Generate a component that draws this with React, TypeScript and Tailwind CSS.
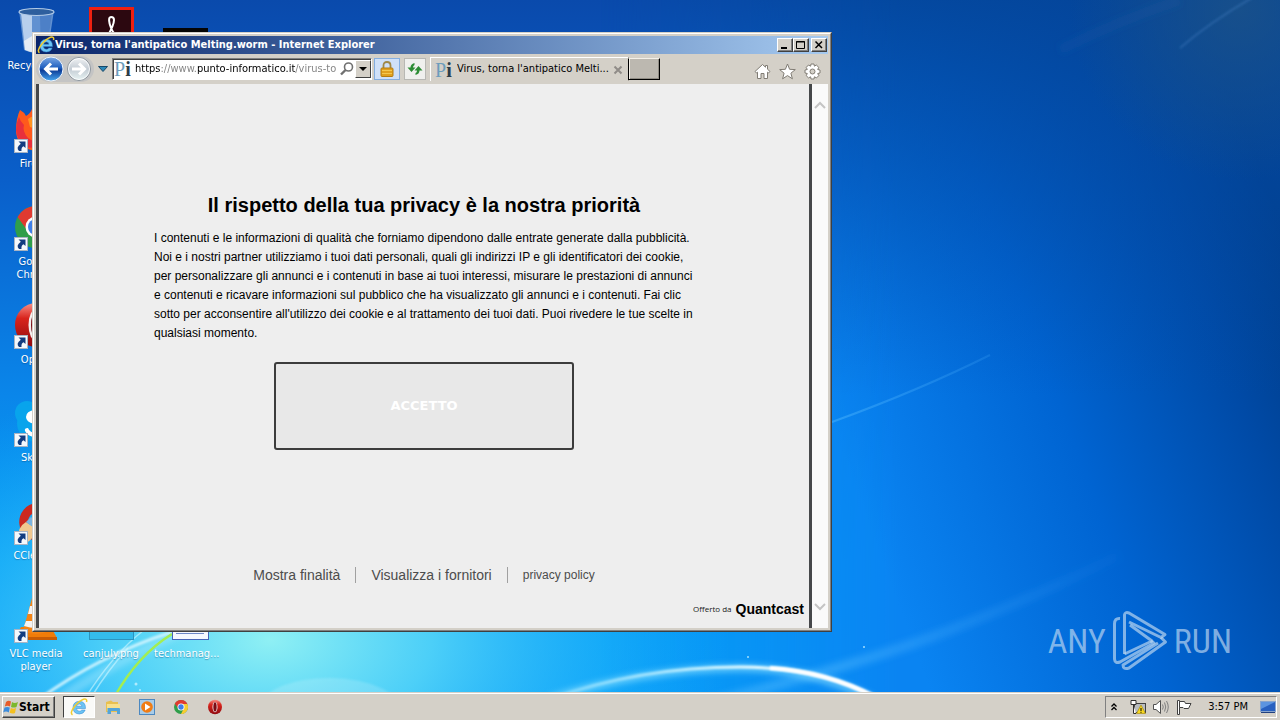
import { useState } from "react"
import type { ReactNode } from "react"

const tahoma = "font-['DejaVu_Sans_Condensed','DejaVu_Sans',sans-serif]"
const arial = "font-['Liberation_Sans',Arial,sans-serif]"

function Wallpaper() {
  return (
    <svg className="absolute inset-0 h-full w-full" viewBox="0 0 1280 720" preserveAspectRatio="none" aria-hidden="true">
      <defs>
        <linearGradient id="sky" x1="0" y1="0" x2="0" y2="1">
          <stop offset="0" stopColor="#0a4aac" />
          <stop offset="0.25" stopColor="#0a5fca" />
          <stop offset="0.55" stopColor="#0a86ea" />
          <stop offset="0.78" stopColor="#02a2f6" />
          <stop offset="1" stopColor="#0aa4fa" />
        </linearGradient>
        <linearGradient id="right" x1="830" y1="420" x2="1290" y2="250" gradientUnits="userSpaceOnUse">
          <stop offset="0" stopColor="#0a84f2" />
          <stop offset="0.45" stopColor="#0064d2" />
          <stop offset="0.8" stopColor="#004aa6" />
          <stop offset="1" stopColor="#003c88" />
        </linearGradient>
        <linearGradient id="topShade" x1="0" y1="0" x2="0" y2="1">
          <stop offset="0" stopColor="#04459a" stopOpacity="0.9" />
          <stop offset="0.2" stopColor="#044aa4" stopOpacity="0.6" />
          <stop offset="0.55" stopColor="#0450b0" stopOpacity="0" />
        </linearGradient>
        <linearGradient id="fade" x1="600" y1="0" x2="900" y2="0" gradientUnits="userSpaceOnUse">
          <stop offset="0" stopColor="#fff" stopOpacity="0" />
          <stop offset="1" stopColor="#fff" />
        </linearGradient>
        <mask id="rightMask">
          <rect width="1280" height="720" fill="url(#fade)" />
        </mask>
        <radialGradient id="glow" cx="270" cy="640" r="460" gradientUnits="userSpaceOnUse" gradientTransform="translate(0 256) scale(1 0.6)">
          <stop offset="0" stopColor="#8ff0f4" />
          <stop offset="0.35" stopColor="#54d4f8" stopOpacity="0.9" />
          <stop offset="1" stopColor="#14a2fa" stopOpacity="0" />
        </radialGradient>
        <radialGradient id="corner" cx="1240" cy="10" r="170" gradientUnits="userSpaceOnUse">
          <stop offset="0" stopColor="#1c5288" stopOpacity="0.8" />
          <stop offset="1" stopColor="#1c5288" stopOpacity="0" />
        </radialGradient>
        <linearGradient id="arc" x1="550" y1="0" x2="880" y2="0" gradientUnits="userSpaceOnUse">
          <stop offset="0" stopColor="#9fe6ff" stopOpacity="0.5" />
          <stop offset="0.6" stopColor="#e6fbff" />
          <stop offset="1" stopColor="#fff" />
        </linearGradient>
        <linearGradient id="ray" x1="830" y1="0" x2="1150" y2="0" gradientUnits="userSpaceOnUse">
          <stop offset="0" stopColor="#5cc0ff" stopOpacity="0.4" />
          <stop offset="1" stopColor="#3aa0ff" stopOpacity="0" />
        </linearGradient>
        <filter id="soft" x="-20%" y="-50%" width="140%" height="200%">
          <feGaussianBlur stdDeviation="3" />
        </filter>
        <filter id="softer" x="-20%" y="-50%" width="140%" height="200%">
          <feGaussianBlur stdDeviation="1" />
        </filter>
      </defs>
      <rect width="1280" height="720" fill="url(#sky)" />
      <g mask="url(#rightMask)">
        <rect x="600" width="680" height="720" fill="url(#right)" />
        <rect x="600" width="680" height="720" fill="url(#topShade)" />
      </g>
      <rect x="1000" width="280" height="200" fill="url(#corner)" />
      <rect y="300" width="860" height="420" fill="url(#glow)" />
      <path d="M245 720 Q265 678 330 678 Q390 678 418 720Z" fill="#fff" opacity="0.16" filter="url(#softer)" />
      <g fill="none">
        <path d="M832 422 Q920 390 990 355" stroke="url(#ray)" strokeWidth="2" />
        <path d="M700 705 Q860 665 950 630 T1120 555" stroke="url(#ray)" strokeWidth="10" filter="url(#soft)" />
        <path d="M1180 48 Q1210 22 1255 -4" stroke="#4a86c8" strokeOpacity="0.35" strokeWidth="2" filter="url(#softer)" />
        <path d="M1060 50 Q1120 20 1180 0" stroke="#2a68b0" strokeOpacity="0.15" strokeWidth="10" filter="url(#soft)" />
        <path d="M0 740 Q90 672 190 628" stroke="#c8f4ff" strokeOpacity="0.35" strokeWidth="9" filter="url(#soft)" />
        <path d="M38 700 Q100 655 172 632" stroke="#dcf8ff" strokeOpacity="0.85" strokeWidth="3" filter="url(#softer)" />
        <path d="M84 700 Q112 655 144 630 M92 696 Q108 670 128 648" stroke="#d0f6ff" strokeOpacity="0.6" strokeWidth="1.5" />
        <path d="M115 696 Q138 655 172 634" stroke="#a4ee50" strokeWidth="2.5" />
        <path d="M550 699 Q640 669 740 668 Q820 668 884 706" stroke="#8adfff" strokeOpacity="0.7" strokeWidth="7" filter="url(#soft)" />
        <path d="M550 699 Q640 667 740 667 Q820 667 876 698" stroke="url(#arc)" strokeWidth="3" filter="url(#softer)" />
        <path d="M770 668 Q825 671 876 697" stroke="#fff" strokeWidth="4" filter="url(#softer)" />
      </g>
      <g fill="#c8f2ff" opacity="0.8">
        <circle cx="748" cy="657" r="1" />
        <circle cx="864" cy="647" r="1" />
        <circle cx="136" cy="684" r="1.5" />
        <circle cx="140" cy="690" r="1" />
      </g>
    </svg>
  )
}

/* ---------- desktop icons ---------- */

function BinIcon() {
  return (
    <svg viewBox="0 0 48 48" className="h-12 w-12">
      <path d="M7 3 L42 3 L36 43 Q24 49 12 43Z" fill="#7fa8dc" fillOpacity="0.75" />
      <path d="M9 6 L20 8 L20 44 L13 43Z" fill="#dbe9fa" fillOpacity="0.7" />
      <path d="M28 9 L40 6 L35 42 L29 44Z" fill="#3f74c0" fillOpacity="0.6" />
      <path d="M12 34 L20 29 L30 34 L36 32 L34 43 Q24 48 13 43Z" fill="#eef2f6" fillOpacity="0.85" />
      <ellipse cx="24.500" cy="5" rx="17.500" ry="3.500" fill="#2e5f9e" stroke="#b4cce8" strokeWidth="1.200" />
    </svg>
  )
}

function AcrobatIcon() {
  return (
    <svg viewBox="0 0 48 48" className="h-12 w-12">
      <rect x="3.500" y="1.500" width="42" height="42" fill="#2c0810" stroke="#ee2010" strokeWidth="3" />
      <path d="M24 10c-3 0-2 6 0 11 2 5 6 9 11 9 3-1 1-4-6-4-6 0-13 4-15 8-1 3 3 2 6-4 3-5 7-13 7-17 0-2-1-3-3-3z" fill="none" stroke="#fff" strokeWidth="2" />
    </svg>
  )
}

function TerminalIcon() {
  return (
    <svg viewBox="0 0 48 48" className="h-12 w-12">
      <rect x="1" y="21" width="45" height="26" fill="#050505" />
    </svg>
  )
}

function FirefoxIcon() {
  return (
    <svg viewBox="0 0 48 48" className="h-12 w-12">
      <path d="M8 5 Q12 7 14 11 Q18 9 20 4 Q25 8 28 8 Q46 10 46 27 Q45 45 26 46 Q6 45 4 27 Q4 13 8 5Z" fill="#ff5a1c" />
      <path d="M4 25 Q4 18 7 12 Q8 16 12 20 Q10 26 16 33 Q22 38 30 37 Q20 46 12 41 Q5 35 4 25Z" fill="#e8303c" />
      <path d="M16 14 Q20 10 28 12 L22 18 L24 24 L18 22Z" fill="#ff9420" />
      <circle cx="29" cy="25" r="9" fill="#3a2a9c" />
    </svg>
  )
}

function ChromeIcon({ className = "h-12 w-12" }: { className?: string }) {
  return (
    <svg viewBox="0 0 48 48" className={className}>
      <circle cx="24" cy="24" r="21" fill="#2f9e4a" />
      <path d="M5.500 14 A21 21 0 0 1 43 15 L24 15 Q16 16 15 27Z" fill="#e03a30" />
      <path d="M43 15 A21 21 0 0 1 24 45 L32 29 Q35 21 29 15Z" fill="#f8cc30" />
      <circle cx="24" cy="24" r="10.500" fill="#fff" />
      <circle cx="24" cy="24" r="8" fill="#3f7fe8" />
    </svg>
  )
}

function OperaIcon({ className = "h-12 w-12" }: { className?: string }) {
  return (
    <svg viewBox="0 0 48 48" className={className}>
      <defs>
        <linearGradient id="operaRed" x1="0" y1="0" x2="0" y2="1">
          <stop offset="0" stopColor="#f89088" />
          <stop offset="0.35" stopColor="#d8241c" />
          <stop offset="1" stopColor="#8e0a10" />
        </linearGradient>
      </defs>
      <ellipse cx="24" cy="24" rx="21" ry="22" fill="url(#operaRed)" />
      <ellipse cx="24" cy="24" rx="7.500" ry="16" fill="#f4f0f0" />
      <ellipse cx="24" cy="24" rx="5" ry="14" fill="#7c0c14" />
    </svg>
  )
}

function SkypeIcon() {
  return (
    <svg viewBox="0 0 48 48" className="h-12 w-12">
      <circle cx="15" cy="14" r="12" fill="#08a4ec" />
      <circle cx="24" cy="24" r="19" fill="#08a4ec" />
      <circle cx="33" cy="34" r="12" fill="#0894dc" />
      <path d="M33 17 Q30 11 23 11 Q14 12 14 18 Q14 23 22 25 Q31 27 31 30 Q30 34 24 34 Q18 34 16 29 Q12 29 13 32 Q16 38 24 38 Q36 37 36 29 Q35 23 27 21 Q19 19 20 17 Q25 13 29 19 Q33 20 33 17Z" fill="#fff" />
    </svg>
  )
}

function CCleanerIcon() {
  return (
    <svg viewBox="0 0 48 48" className="h-12 w-12">
      <path d="M38 10 A19 19 0 1 0 40 38 L33 32 A10 10 0 1 1 32 17Z" fill="#cc2820" />
      <path d="M6 43 Q5 30 14 25 L24 32 Q22 42 14 46Z" fill="#f0c890" />
      <path d="M14 25 L19 20 L27 28 L24 32Z" fill="#7cb4e0" />
    </svg>
  )
}

function VlcIcon() {
  return (
    <svg viewBox="0 0 48 48" className="h-12 w-12">
      <path d="M9 32 H39 L45 43 H3Z" fill="#f07c08" />
      <path d="M3 42 H45 V45 H3Z" fill="#c85c04" />
      <path d="M20 3 H28 L37 36 Q24 42 11 36Z" fill="#f48414" />
      <path d="M18 11 H30 L32 19 H16Z M14 26 H34 L36 31 Q24 35 12 31Z" fill="#f4f4f4" />
    </svg>
  )
}

function ImageFileIcon() {
  return (
    <svg viewBox="0 0 48 48" className="h-12 w-12">
      <rect x="2.500" y="4.500" width="44" height="40" fill="#34bcec" stroke="#2c94c0" />
    </svg>
  )
}

function DocumentIcon() {
  return (
    <svg viewBox="0 0 48 48" className="h-12 w-12">
      <rect x="10.500" y="2.500" width="36" height="42" fill="#f4f8ff" stroke="#4464b8" />
      <path d="M14 32.500H42M14 38.500H42" stroke="#6c88c8" />
    </svg>
  )
}

function ShortcutArrow() {
  return (
    <svg viewBox="0 0 14 14" className="absolute bottom-0 left-0.5 h-3.5 w-3.5">
      <rect x="0.500" y="0.500" width="13" height="13" fill="#f4f8fc" stroke="#a8b4c4" />
      <path d="M4.500 2.500H11.500V9L9.500 7.200Q7 8.500 7.500 12H5Q1.500 8.500 6.800 4.700Z" fill="#123c80" />
    </svg>
  )
}

interface DesktopItem {
  label: string
  icon: ReactNode
  shortcut?: boolean
  place?: string
}

const desktopItems: DesktopItem[] = [
  { label: "Recycle Bin", icon: <BinIcon /> },
  { label: "Firefox", icon: <FirefoxIcon />, shortcut: true },
  { label: "Google Chrome", icon: <ChromeIcon />, shortcut: true },
  { label: "Opera", icon: <OperaIcon />, shortcut: true },
  { label: "Skype", icon: <SkypeIcon />, shortcut: true },
  { label: "CCleaner", icon: <CCleanerIcon />, shortcut: true },
  { label: "VLC media player", icon: <VlcIcon />, shortcut: true },
  { label: "", icon: <AcrobatIcon />, place: "col-start-2 row-start-1" },
  { label: "canjuly.png", icon: <ImageFileIcon />, place: "col-start-2 row-start-7" },
  { label: "", icon: <TerminalIcon />, place: "col-start-3 row-start-1" },
  { label: "techmanag...", icon: <DocumentIcon />, place: "col-start-3 row-start-7" },
]

function DesktopIcons() {
  return (
    <ul className="relative grid w-fit grid-flow-col grid-cols-[72px_78px_72px] grid-rows-[repeat(6,98px)_auto] pt-[7px]">
      {desktopItems.map((item, i) => (
        <li key={i} className={`flex flex-col items-center ${item.place ?? ""}`}>
          <div className="relative h-12 w-12">
            {item.icon}
            {item.shortcut && <ShortcutArrow />}
          </div>
          <span className="mt-1 w-16 text-center text-[11px] leading-[13px] text-white [text-shadow:0_1px_1px_#00306060]">
            {item.label}
          </span>
        </li>
      ))}
    </ul>
  )
}

/* ---------- browser window ---------- */

function IeLogo({ className }: { className: string }) {
  return (
    <svg viewBox="0 0 18 18" className={className}>
      <path d="M15.500 10.500H6.500Q6.800 13.200 9.300 13.200Q11 13.200 11.800 12H15.200Q13.800 16 9.300 16Q3 15.600 3 9.500Q3.300 3.500 9.300 3.300Q15.800 3.600 15.500 10.500ZM6.600 8.200H12Q11.700 6 9.300 6Q7 6 6.600 8.200Z" fill="#6cc4f4" stroke="#2c84d0" strokeWidth="0.500" />
      <path d="M2.500 16.800Q-0.500 15 4.500 8.500Q9 3 13.500 1.300Q17.500 0.300 16.500 4" fill="none" stroke="#f0cc30" strokeWidth="1.500" />
    </svg>
  )
}

function PiLogo() {
  return (
    <span className="flex w-[18px] shrink-0 items-center font-['Liberation_Serif',serif] text-[20px] leading-5" aria-hidden="true">
      <span className="text-[#6c9cbc]">P</span>
      <span className="font-bold text-[#2c3c48]">i</span>
    </span>
  )
}

function CaptionButton({ label, children }: { label: string; children: ReactNode }) {
  return (
    <button
      aria-label={label}
      className="flex h-3.5 w-4 items-center justify-center border border-t-white border-r-[#404040] border-b-[#404040] border-l-white bg-[#d4d0c8] shadow-[inset_-1px_-1px_#808080]"
    >
      <svg viewBox="0 0 12 10" className="h-2.5 w-3" stroke="#000" fill="none">
        {children}
      </svg>
    </button>
  )
}

function TitleBar() {
  return (
    <header className="flex h-[18px] items-center bg-linear-to-r from-[#0a246a] to-[#a6caf0] px-px">
      <IeLogo className="h-[18px] w-[18px] shrink-0" />
      <h1 className="flex-1 truncate text-[11px] font-bold text-white">Virus, torna l'antipatico Melting.worm - Internet Explorer</h1>
      <CaptionButton label="Minimize">
        <path d="M2 8H8" strokeWidth="2" />
      </CaptionButton>
      <CaptionButton label="Maximize">
        <path d="M1.500 1.500H9.500V8.500H1.500ZM1 2H10" />
      </CaptionButton>
      <div className="w-0.5" />
      <CaptionButton label="Close">
        <path d="M2.500 1.500L9 8M9 1.500L2.500 8" strokeWidth="1.500" />
      </CaptionButton>
    </header>
  )
}

function Toolbar() {
  const [url, setUrl] = useState("https://www.punto-informatico.it/virus-to")

  return (
    <nav className="flex h-[30px] items-center bg-[#d4d0c8] pr-[7px]">
      <div className="flex rounded-full bg-[#c4c4c4] px-px">
        <button aria-label="Back" className="h-[26px] w-7">
          <svg viewBox="0 0 28 26" className="h-full w-full">
            <defs>
              <linearGradient id="backFill" x1="0" y1="0" x2="0" y2="1">
                <stop offset="0" stopColor="#7ca8e4" />
                <stop offset="0.45" stopColor="#2060c0" />
                <stop offset="0.55" stopColor="#0c3c98" />
                <stop offset="1" stopColor="#48a8f0" />
              </linearGradient>
            </defs>
            <circle cx="14" cy="13" r="12" fill="url(#backFill)" stroke="#eef4fc" />
            <path d="M21 13H9M14 7.500L8.500 13L14 18.500" fill="none" stroke="#fff" strokeWidth="3" />
          </svg>
        </button>
        <button aria-label="Forward" className="h-[26px] w-7">
          <svg viewBox="0 0 28 26" className="h-full w-full">
            <defs>
              <linearGradient id="fwdFill" x1="0" y1="0" x2="0" y2="1">
                <stop offset="0" stopColor="#f0f2f4" />
                <stop offset="0.5" stopColor="#c4ccd4" />
                <stop offset="1" stopColor="#e8f4f4" />
              </linearGradient>
            </defs>
            <circle cx="14" cy="13" r="11.500" fill="url(#fwdFill)" stroke="#8c949c" />
            <circle cx="14" cy="13" r="10.500" fill="none" stroke="#fff" strokeOpacity="0.8" />
            <path d="M7 13H19M14 7.500L19.500 13L14 18.500" fill="none" stroke="#fff" strokeWidth="3" />
          </svg>
        </button>
      </div>
      <button aria-label="Recent pages" className="flex w-[18px] justify-center">
        <svg viewBox="0 0 10 6" className="h-1.5 w-2.5">
          <path d="M0.500 0.500H9.500L5 5.500Z" fill="#2c88b8" stroke="#184868" />
        </svg>
      </button>
      <div className="flex h-[22px] w-[260px] shrink-0 items-center border border-t-[#808080] border-r-white border-b-white border-l-[#808080] bg-white pl-px shadow-[inset_1px_1px_#404040]">
        <PiLogo />
        <input
          aria-label="Address"
          value={url}
          onChange={(e) => setUrl(e.target.value)}
          className="ml-[3px] min-w-0 flex-1 bg-[linear-gradient(to_right,#000_26px,#808080_26px,#808080_62px,#000_62px,#000_160px,#808080_160px)] bg-clip-text text-[11px] text-transparent caret-black outline-none"
        />
        <svg viewBox="0 0 16 16" className="h-4 w-4 shrink-0" fill="none">
          <circle cx="9.500" cy="6" r="4" stroke="#707070" strokeWidth="1.600" />
          <path d="M6.500 9L2 13.500" stroke="#707070" strokeWidth="2.400" />
        </svg>
        <button
          aria-label="Show address bar list"
          className="flex h-[18px] w-4 items-center justify-center border border-t-white border-r-[#404040] border-b-[#404040] border-l-white bg-[#d4d0c8]"
        >
          <svg viewBox="0 0 8 4" className="h-1 w-2">
            <path d="M0 0H8L4 4Z" fill="#000" />
          </svg>
        </button>
      </div>
      <button aria-label="Security report" className="ml-0.5 flex h-[22px] w-[26px] shrink-0 items-center justify-center border border-[#84aee0] bg-[#cfe0f8]">
        <svg viewBox="0 0 16 18" className="h-[18px] w-4">
          <path d="M4.500 8V5.500Q4.500 2 8 2Q11.500 2 11.500 5.500V8" fill="none" stroke="#a08848" strokeWidth="1.800" />
          <rect x="2" y="8" width="12" height="8.500" rx="1" fill="#e0a020" stroke="#b47c10" />
          <path d="M3 10.500H13M3 13.500H13" stroke="#f4c850" />
        </svg>
      </button>
      <button aria-label="Refresh" className="ml-1 flex h-[22px] w-[22px] shrink-0 items-center justify-center border border-[#b8b8b4] bg-[#f0f0ee]">
        <svg viewBox="0 0 16 16" className="h-4 w-4" fill="#2c8c34">
          <path d="M7.500 2Q3.500 3 3.500 6.500H0.500L4.500 11L8.500 6.500H6Q6 4.500 7.500 4Z" />
          <path d="M8.500 14Q12.500 13 12.500 9.500H15.500L11.500 5L7.500 9.500H10Q10 11.500 8.500 12Z" />
        </svg>
      </button>
      <div className="ml-1 flex h-6 w-[198px] shrink-0 items-center border-t border-l border-white pl-1 shadow-[1px_0_#a8a49c]">
        <PiLogo />
        <span className="ml-1 flex-1 truncate text-[11px]">Virus, torna l'antipatico Melti...</span>
        <button aria-label="Close tab" className="mr-[5px] shrink-0">
          <svg viewBox="0 0 10 10" className="h-2.5 w-2.5">
            <path d="M1.500 1.500L8.500 8.500M8.500 1.500L1.500 8.500" stroke="#908c88" strokeWidth="2" />
          </svg>
        </button>
      </div>
      <button aria-label="New tab" className="h-[22px] w-8 shrink-0 border border-t-[#f4f0e8] border-r-black border-b-black border-l-black bg-[#bcb8b0] shadow-[inset_1px_0_#f4f0e8,inset_-1px_-1px_#908c84]" />
      <div className="ml-auto flex gap-2 pt-1 text-[#807c74]">
        <button aria-label="Home">
          <svg viewBox="0 0 17 17" className="h-[17px] w-[17px]" fill="#fff" stroke="currentColor">
            <path d="M8.500 1.500L1 8.500L2.500 10L3.500 9.200V15.500H7V10.500H10V15.500H13.500V9.200L14.500 10L16 8.500L13.500 6.200V2.500H11.500V4.200Z" />
          </svg>
        </button>
        <button aria-label="Favorites">
          <svg viewBox="0 0 17 17" className="h-[17px] w-[17px]" fill="#fff" stroke="currentColor">
            <path d="M8.500 1L10.600 6.300L16.300 6.600L11.900 10.200L13.400 15.800L8.500 12.600L3.600 15.800L5.100 10.200L0.700 6.600L6.400 6.300Z" />
          </svg>
        </button>
        <button aria-label="Tools">
          <svg viewBox="0 0 17 17" className="h-[17px] w-[17px]" fill="#fff" stroke="currentColor">
            <path d="M7 1H10L10.400 3.200L12.300 2L14.800 4.400L13.700 6.500L16 7V10L13.700 10.500L14.800 12.600L12.500 14.900L10.400 13.800L10 16H7L6.600 13.800L4.500 14.900L2.200 12.600L3.300 10.500L1 10V7L3.300 6.500L2.200 4.400L4.500 2L6.600 3.200Z" />
            <circle cx="8.500" cy="8.500" r="2.500" fill="#d4d0c8" />
          </svg>
        </button>
      </div>
    </nav>
  )
}

function ConsentPage() {
  return (
    <main className={`flex flex-1 flex-col border-x-3 border-[#46484a] bg-[#eeeeee] pt-[107px] pb-[9px] ${arial}`}>
      <h2 className="text-center text-[20px] leading-7 font-bold text-black">Il rispetto della tua privacy è la nostra priorità</h2>
      <p className="mx-auto mt-[10px] max-w-[540px] text-[12px] leading-[19px] text-black">
        I contenuti e le informazioni di qualità che forniamo dipendono dalle entrate generate dalla pubblicità. Noi e i
        nostri partner utilizziamo i tuoi dati personali, quali gli indirizzi IP e gli identificatori dei cookie, per
        personalizzare gli annunci e i contenuti in base ai tuoi interessi, misurare le prestazioni di annunci e
        contenuti e ricavare informazioni sul pubblico che ha visualizzato gli annunci e i contenuti. Fai clic sotto per
        acconsentire all'utilizzo dei cookie e al trattamento dei tuoi dati. Puoi rivedere le tue scelte in qualsiasi
        momento.
      </p>
      <button className="mx-auto mt-[19px] h-[88px] w-[300px] rounded-[3px] border-2 border-[#3c3c3c] bg-[#e8e8e8] font-['DejaVu_Sans',sans-serif] text-[13px] font-bold text-white">
        ACCETTO
      </button>
      <div className="mt-[113px] flex h-6 items-center justify-center text-[14px] text-[#4c4c4c]">
        <a href="#finalita" className="border-r border-[#a0a0a0] pr-[15px] leading-4">Mostra finalità</a>
        <a href="#fornitori" className="border-r border-[#a0a0a0] px-[15px] leading-4">Visualizza i fornitori</a>
        <a href="#privacy" className="pl-[15px] text-[12px] leading-4">privacy policy</a>
      </div>
      <footer className="mt-3 flex h-5 items-center justify-end gap-1 pr-[5px] text-black">
        <span className="font-['Open_Sans',sans-serif] text-[8px] text-[#202020]">Offerto da</span>
        <span className="text-[14px] font-bold">Quantcast</span>
      </footer>
    </main>
  )
}

function Scrollbar() {
  return (
    <div className="flex w-4 flex-col items-center justify-between bg-[#fafafa] py-4 text-[#c4c4c4]">
      <svg viewBox="0 0 12 10" className="h-2.5 w-3" fill="none" stroke="currentColor" strokeWidth="2">
        <path d="M1 8L6 3L11 8" />
      </svg>
      <svg viewBox="0 0 12 10" className="h-2.5 w-3" fill="none" stroke="currentColor" strokeWidth="2">
        <path d="M1 2L6 7L11 2" />
      </svg>
    </div>
  )
}

function BrowserWindow() {
  return (
    <section className="absolute top-8 left-8 w-5/8 border border-t-[#d4d0c8] border-r-[#404040] border-b-[#404040] border-l-[#d4d0c8]">
      <div className="border border-t-white border-r-[#808080] border-b-[#808080] border-l-white bg-[#d4d0c8] p-0.5">
        <TitleBar />
        <Toolbar />
        <div className="flex">
          <ConsentPage />
          <Scrollbar />
        </div>
      </div>
    </section>
  )
}

/* ---------- watermark ---------- */

function Watermark() {
  return (
    <div className="absolute right-12 bottom-5 flex items-center gap-1.5 font-['Roboto_Condensed','Open_Sans_Condensed','Noto_Sans_ExtraCondensed','Noto_Sans_Condensed','Roboto',sans-serif] text-[34px] leading-none text-[#b8d4f0]/70">
      <span>ANY</span>
      <svg viewBox="0 0 56 62" className="h-[62px] w-14" fill="none" stroke="currentColor" strokeWidth="3" strokeLinejoin="round">
        <path d="M8 8.500Q2.500 8 2.500 14V49Q3 54 8 52L42 33L38.500 31" />
        <path d="M12.500 44V5Q13 1.500 17 3L53 24.500L49 27.500L17 12" />
        <path d="M12.500 44L40 31L18 15" />
        <path d="M49 27.500L53.500 32L17 58Q11 60 11 55L46 33" />
      </svg>
      <span>RUN</span>
    </div>
  )
}

/* ---------- taskbar ---------- */

function WindowsFlag() {
  return (
    <svg viewBox="0 0 16 16" className="h-4 w-4">
      <path d="M3 3Q5.500 1 8 2.500L7 7.500Q4.500 6.200 1.800 7.500Z" fill="#e85c28" />
      <path d="M9 3Q11.500 4.800 15 3L13.500 8Q10.500 9.200 8 7.900Z" fill="#7cb82c" />
      <path d="M1.500 8.600Q4.200 7.200 6.800 8.600L5.800 13.500Q3 11.700 0.200 13.500Z" fill="#3c8cdc" />
      <path d="M7.800 9Q10.300 10.300 13 9.100L12 14Q9.300 15.300 6.700 13.800Z" fill="#f4c020" />
    </svg>
  )
}

function Taskbar() {
  return (
    <footer className="relative flex h-7 items-center border-t border-[#d4d0c8] bg-[#d4d0c8] pt-px pr-[3px] pl-0.5 shadow-[inset_0_1px_#fff]">
      <button className="flex h-[22px] items-center border border-t-white border-r-[#404040] border-b-[#404040] border-l-white pr-1 text-[12px] font-bold shadow-[inset_-1px_-1px_#808080]">
        <WindowsFlag />
        Start
      </button>
      <div className="ml-2 flex items-center gap-[2px]">
        <button aria-label="Internet Explorer" className="flex h-[22px] w-8 items-center justify-center border border-t-[#404040] border-r-white border-b-white border-l-[#404040] bg-[#fafaf8]">
          <IeLogo className="h-[18px] w-[18px]" />
        </button>
        <button aria-label="Windows Explorer" className="flex h-[22px] w-8 items-center justify-center">
          <svg viewBox="0 0 16 16" className="h-4 w-4">
            <path d="M1 3L6 1.500L8 3H13V13H1Z" fill="#e8c050" />
            <path d="M2 5H15V12H2Z" fill="#f8e08c" />
            <path d="M2.500 9H14Q15 9 15 10V15H12V12H6V15H2.500Z" fill="#54a4d8" />
          </svg>
        </button>
        <button aria-label="Media Player" className="flex h-[22px] w-8 items-center justify-center">
          <svg viewBox="0 0 16 16" className="h-4 w-4">
            <rect x="0.500" y="0.500" width="15" height="15" fill="#a8cce8" stroke="#4c88c0" />
            <circle cx="8" cy="8" r="5.800" fill="#f07c14" />
            <path d="M6 4.500L11.500 8L6 11.500Z" fill="#fff" />
          </svg>
        </button>
        <button aria-label="Chrome" className="flex h-[22px] w-8 items-center justify-center">
          <ChromeIcon className="h-4 w-4" />
        </button>
        <button aria-label="Opera" className="flex h-[22px] w-8 items-center justify-center">
          <OperaIcon className="h-4 w-4" />
        </button>
      </div>
      <div className="ml-auto flex h-[22px] items-center border border-t-[#808080] border-r-white border-b-white border-l-[#808080] pl-1 text-black">
        <button aria-label="Show hidden icons" className="flex w-2 justify-center">
          <svg viewBox="0 0 8 8" className="h-2 w-2" fill="none" stroke="#000" strokeWidth="1.300">
            <path d="M1.500 3.500L4 1L6.500 3.500M1.500 7L4 4.500L6.500 7" />
          </svg>
        </button>
        <svg viewBox="0 0 16 16" className="ml-3 h-4 w-4">
          <rect x="4.500" y="4.500" width="11" height="9" fill="#b8bcc0" stroke="#404040" />
          <path d="M1 1.500H6V5.500H1ZM3.500 5.500V14.500H6" fill="#fff" stroke="#303030" />
          <path d="M11 6L15.500 14.500H6.500Z" fill="#f8d820" stroke="#a08000" strokeWidth="0.600" />
          <path d="M11 9V12M11 12.800V13.800" stroke="#000" />
        </svg>
        <svg viewBox="0 0 18 16" className="ml-1.5 h-4 w-[18px]" fill="none" stroke="#505050">
          <path d="M1.500 5.500H4L8.500 1.500V14.500L4 10.500H1.500Z" fill="#fff" />
          <path d="M10.500 5.500Q12 8 10.500 10.500M12.500 3.500Q15 8 12.500 12.500M14.500 2Q18 8 14.500 14" stroke="#808080" />
        </svg>
        <svg viewBox="0 0 16 16" className="ml-1.5 h-4 w-4" fill="#fff" stroke="#404040">
          <path d="M1.500 1.500H3.500V15.500H1.500Z" />
          <path d="M3.500 2.500H8.500L9.500 4.500H15L12.500 9.500H8L7 8.500H3.500Z" />
        </svg>
        <time className="ml-4 text-[11px]">3:57 PM</time>
        <button aria-label="Show desktop" className="ml-3">
          <svg viewBox="0 0 16 14" className="h-3.5 w-4">
            <rect x="0.500" y="1.500" width="15" height="10" fill="#2860c0" stroke="#88a4cc" />
            <path d="M1 2H15L1 9Z" fill="#5c94e0" />
            <path d="M1 12.500H15" stroke="#204080" />
          </svg>
        </button>
      </div>
    </footer>
  )
}

export default function App() {
  return (
    <div className={`relative flex min-h-screen flex-col overflow-hidden bg-[#0a84f2] ${tahoma}`}>
      <Wallpaper />
      <div className="relative flex-1">
        <DesktopIcons />
        <BrowserWindow />
        <Watermark />
      </div>
      <Taskbar />
    </div>
  )
}
